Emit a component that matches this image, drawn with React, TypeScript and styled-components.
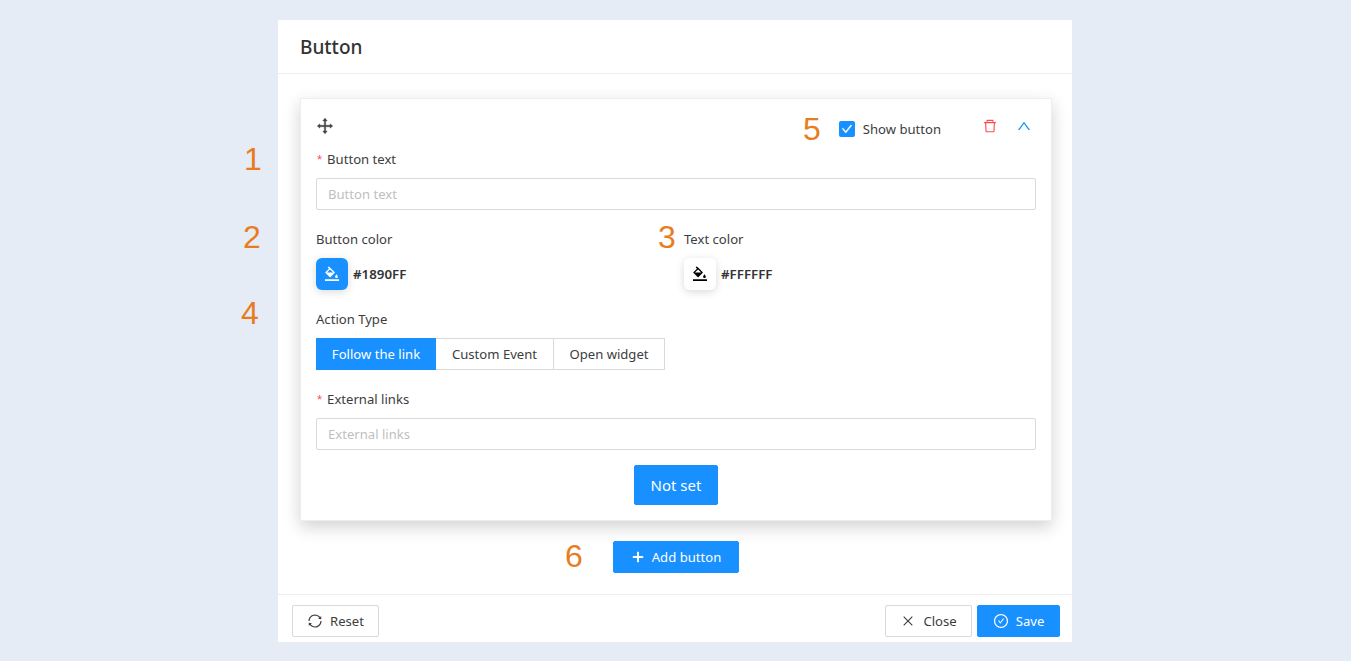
import React from 'react';
import styled, { createGlobalStyle } from 'styled-components';
import {
  AiOutlineDrag, AiOutlineDelete, AiOutlineUp, AiOutlineBgColors, AiOutlinePlus,
  AiOutlineSync, AiOutlineClose, AiOutlineCheckCircle, AiOutlineCheck,
} from 'react-icons/ai';

const Global = createGlobalStyle`
  html, body { margin: 0; padding: 0; height: 100%; overflow: hidden; background: #e5ecf6; }
  body { font-family: "Noto Sans", "Open Sans", "Liberation Sans", sans-serif; font-size: 13.1px; color: #3d3d3d; }
  * { box-sizing: border-box; }
`;

const Page = styled.div`
  position: relative;
  height: 661px;
  padding-top: 20px;
  display: flex;
  justify-content: center;
  background: #e5ecf6;
`;
const Modal = styled.div`
  width: 794px;
  height: 622px;
  margin-left: -1px;
  background: #fff;
  display: flex;
  flex-direction: column;
`;
const Header = styled.div`
  height: 54px;
  padding: 0 22px;
  display: flex;
  align-items: center;
  border-bottom: 1px solid #eeeeee;
`;
const Title = styled.h1`
  margin: 0;
  font-size: 19px;
  font-weight: 500;
  color: #333;
`;
const Body = styled.div`
  flex: 1;
  padding: 24px 20px 0 22px;
  display: flex;
  flex-direction: column;
  align-items: stretch;
`;
const Card = styled.div`
  height: 423px;
  padding: 15px;
  background: #fff;
  border: 1px solid #eeeeee;
  box-shadow: 0 6px 16px rgba(0, 0, 0, 0.18);
  display: flex;
  flex-direction: column;
`;
const TopRow = styled.div`
  height: 34px;
  display: flex;
  justify-content: space-between;
  align-items: flex-start;
`;
const Drag = styled.div`
  display: flex;
  color: #444;
  font-size: 20px;
  margin-top: 2px;
  margin-left: -1px;
  svg { stroke: currentColor; stroke-width: 20; }
`;
const TopActions = styled.div`
  display: flex;
  align-items: flex-start;
`;
const CheckLabel = styled.label`
  display: flex;
  align-items: center;
  gap: 8px;
  margin-top: 7px;
  margin-right: 41px;
  line-height: 16px;
`;
const CheckBox = styled.span`
  width: 16px;
  height: 16px;
  border-radius: 2px;
  background: #1890ff;
  color: #fff;
  display: flex;
  align-items: center;
  justify-content: center;
  font-size: 12px;
  svg { stroke: currentColor; stroke-width: 50; }
`;
const IconBtn = styled.span<{ $color: string; $gap?: number }>`
  display: flex;
  font-size: 16px;
  color: ${(p) => p.$color};
  margin-right: ${(p) => p.$gap ?? 0}px;
  margin-top: 4px;
`;
const Field = styled.div<{ $mb?: number }>`
  margin-bottom: ${(p) => p.$mb ?? 18}px;
`;
const Label = styled.div`
  height: 22px;
  line-height: 22px;
  margin-bottom: 8px;
`;
const Req = styled.span`
  color: #ff4d4f;
  margin-right: 5px;
  margin-left: 1px;
  font-family: "Liberation Sans", sans-serif;
`;
const Input = styled.input`
  display: block;
  width: 100%;
  height: 32px;
  padding: 0 11px;
  border: 1px solid #d9d9d9;
  border-radius: 2px;
  font: inherit;
  outline: none;
  &::placeholder { color: #bfbfbf; opacity: 1; }
`;
const ColorGrid = styled.div`
  display: grid;
  grid-template-columns: 1fr 1fr;
  column-gap: 16px;
`;
const ColorRow = styled.div`
  display: flex;
  align-items: center;
  gap: 5px;
`;
const Swatch = styled.div<{ $bg: string; $fg: string }>`
  width: 32px;
  height: 32px;
  border-radius: 6px;
  background: ${(p) => p.$bg};
  color: ${(p) => p.$fg};
  box-shadow: 0 2px 8px rgba(0, 0, 0, 0.15);
  display: flex;
  align-items: center;
  justify-content: center;
  font-size: 18px;
`;
const Hex = styled.span`
  font-weight: 600;
  font-size: 13.3px;
  color: #333;
`;
const Radios = styled.div`
  display: flex;
`;
const Radio = styled.div<{ $active?: boolean; $w: number }>`
  width: ${(p) => p.$w}px;
  height: 32px;
  display: flex;
  align-items: center;
  justify-content: center;
  border: 1px solid ${(p) => (p.$active ? '#1890ff' : '#d9d9d9')};
  border-left-width: ${(p) => (p.$active ? 1 : 0)}px;
  background: ${(p) => (p.$active ? '#1890ff' : '#fff')};
  color: ${(p) => (p.$active ? '#fff' : 'inherit')};
`;
const Center = styled.div`
  display: flex;
  justify-content: center;
`;
const Button = styled.button<{ $primary?: boolean; $w: number; $h?: number; $fs?: number }>`
  width: ${(p) => p.$w}px;
  height: ${(p) => p.$h ?? 32}px;
  padding: 0;
  border-radius: 2px;
  border: 1px solid ${(p) => (p.$primary ? '#1890ff' : '#d9d9d9')};
  background: ${(p) => (p.$primary ? '#1890ff' : '#fff')};
  color: ${(p) => (p.$primary ? '#fff' : '#3d3d3d')};
  font-family: inherit;
  font-size: ${(p) => p.$fs ?? 13.1}px;
  display: flex;
  align-items: center;
  justify-content: center;
  gap: 7px;
  svg { font-size: 16px; }
`;
const PlusIcon = styled(AiOutlinePlus)`
  stroke: currentColor;
  stroke-width: 70;
  font-size: 14px !important;
`;
const CloseIcon = styled(AiOutlineClose)`
  font-size: 14px !important;
  margin: 0 1px;
`;
const AddRow = styled(Center)`
  margin-top: 20px;
`;
const Footer = styled.div`
  height: 48px;
  padding: 10px 12px 0 14px;
  border-top: 1px solid #eeeeee;
  display: flex;
  justify-content: space-between;
`;
const FooterRight = styled.div`
  display: flex;
  gap: 5px;
`;
const Note = styled.span<{ $x: number; $y: number }>`
  position: absolute;
  left: ${(p) => p.$x}px;
  top: ${(p) => p.$y}px;
  font-family: "Liberation Sans", Arial, sans-serif;
  font-size: 32px;
  line-height: 36px;
  color: #e87d1e;
`;

export default function App() {
  return (
    <Page>
      <Global />
      <Modal>
        <Header><Title>Button</Title></Header>
        <Body>
          <Card>
            <TopRow>
              <Drag><AiOutlineDrag /></Drag>
              <TopActions>
                <CheckLabel>
                  <CheckBox><AiOutlineCheck /></CheckBox>
                  Show button
                </CheckLabel>
                <IconBtn $color="#ff4d4f" $gap={18}><AiOutlineDelete /></IconBtn>
                <IconBtn $color="#1890ff" $gap={4}><AiOutlineUp /></IconBtn>
              </TopActions>
            </TopRow>
            <Field>
              <Label><Req>*</Req>Button text</Label>
              <Input placeholder="Button text" />
            </Field>
            <ColorGrid>
              <Field>
                <Label>Button color</Label>
                <ColorRow>
                  <Swatch $bg="#1890ff" $fg="#fff"><AiOutlineBgColors /></Swatch>
                  <Hex>#1890FF</Hex>
                </ColorRow>
              </Field>
              <Field>
                <Label>Text color</Label>
                <ColorRow>
                  <Swatch $bg="#fff" $fg="#000"><AiOutlineBgColors /></Swatch>
                  <Hex>#FFFFFF</Hex>
                </ColorRow>
              </Field>
            </ColorGrid>
            <Field>
              <Label>Action Type</Label>
              <Radios>
                <Radio $active $w={120}>Follow the link</Radio>
                <Radio $w={118}>Custom Event</Radio>
                <Radio $w={111}>Open widget</Radio>
              </Radios>
            </Field>
            <Field $mb={15}>
              <Label><Req>*</Req>External links</Label>
              <Input placeholder="External links" />
            </Field>
            <Center>
              <Button $primary $w={84} $h={40} $fs={15}>Not set</Button>
            </Center>
          </Card>
          <AddRow>
            <Button $primary $w={126}><PlusIcon />Add button</Button>
          </AddRow>
        </Body>
        <Footer>
          <Button $w={87}><AiOutlineSync />Reset</Button>
          <FooterRight>
            <Button $w={87}><CloseIcon />Close</Button>
            <Button $primary $w={83}><AiOutlineCheckCircle />Save</Button>
          </FooterRight>
        </Footer>
      </Modal>
      <Note $x={244} $y={141}>1</Note>
      <Note $x={243} $y={219}>2</Note>
      <Note $x={658} $y={219}>3</Note>
      <Note $x={241} $y={295}>4</Note>
      <Note $x={803} $y={111}>5</Note>
      <Note $x={565} $y={538}>6</Note>
    </Page>
  );
}
